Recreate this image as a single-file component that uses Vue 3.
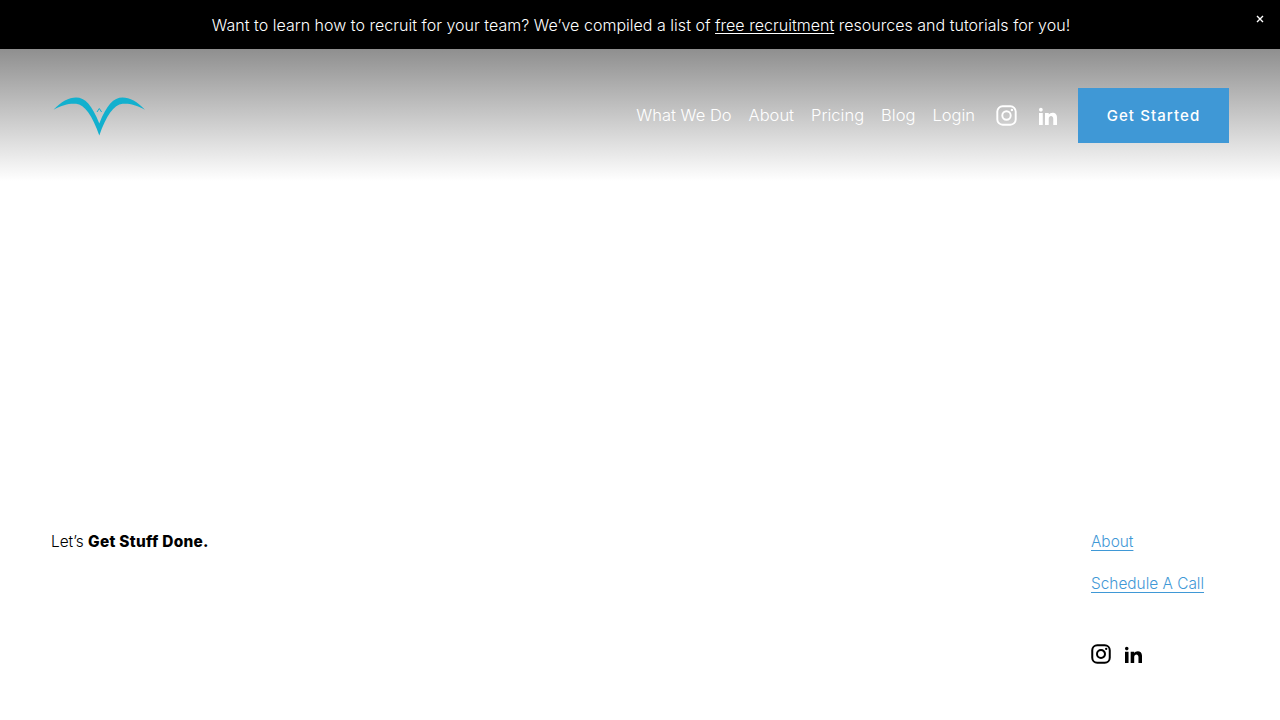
<template>
  <div class="page">
    <div class="banner">
      <p class="banner-text">Want to learn how to recruit for your team? We’ve compiled a list of <a href="#">free recruitment</a> resources and tutorials for you!</p>
      <svg class="banner-close" viewBox="0 0 8 8" width="8" height="8">
        <path d="M1 1L7 7M7 1L1 7" stroke="#fff" stroke-width="1.4"/>
      </svg>
    </div>

    <header class="header">
      <svg class="logo" viewBox="0 0 98 44" width="98" height="44">
        <path fill="#12b0ce" d="M2.5 14.8C10 6.5 18 2.5 25 2.5C34 2.5 41 10 48.3 28.5C55.6 10 62.6 2.5 71.6 2.5C78.6 2.5 86.6 6.5 94 14.8C85 9.6 78 8.2 71.5 8.8C63 9.6 55 21 48.3 40.5C41.6 21 33.6 9.6 25.1 8.8C18.6 8.2 11.6 9.6 2.5 14.8Z"/>
        <path fill="none" stroke="#12b0ce" stroke-width="1" d="M46 17L48.3 13.5L50.6 17"/>
      </svg>
      <nav class="nav">
        <a v-for="item in navItems" :key="item" href="#">{{ item }}</a>
      </nav>
      <div class="socials socials-top">
        <svg viewBox="0 0 24 24" width="21" height="21">
          <rect x="1.5" y="1.5" width="21" height="21" rx="6" fill="none" stroke="currentColor" stroke-width="2.2"/>
          <circle cx="12" cy="12" r="4.8" fill="none" stroke="currentColor" stroke-width="2.2"/>
          <circle cx="18.2" cy="5.8" r="1.4" fill="currentColor"/>
        </svg>
        <svg viewBox="0 0 24 24" width="18" height="18">
          <path fill="currentColor" :d="linkedinPath"/>
        </svg>
      </div>
      <a class="cta" href="#">Get Started</a>
    </header>

    <main class="spacer"></main>

    <footer class="footer">
      <p class="tagline">Let’s <strong>Get Stuff Done.</strong></p>
      <div class="footer-side">
        <a href="#">About</a>
        <a href="#">Schedule A Call</a>
        <div class="socials socials-bottom">
          <svg viewBox="0 0 24 24" width="20" height="20">
            <rect x="1.5" y="1.5" width="21" height="21" rx="6" fill="none" stroke="currentColor" stroke-width="2.4"/>
            <circle cx="12" cy="12" r="4.8" fill="none" stroke="currentColor" stroke-width="2.4"/>
            <circle cx="18.2" cy="5.8" r="1.4" fill="currentColor"/>
          </svg>
          <svg viewBox="0 0 24 24" width="17" height="17">
            <path fill="currentColor" :d="linkedinPath"/>
          </svg>
        </div>
      </div>
    </footer>
  </div>
</template>

<script setup>
const navItems = ['What We Do', 'About', 'Pricing', 'Blog', 'Login']
const linkedinPath = 'M4.98 3.5c0 1.381-1.11 2.5-2.48 2.5s-2.48-1.119-2.48-2.5c0-1.38 1.11-2.5 2.48-2.5s2.48 1.12 2.48 2.5zm.02 4.5h-5v16h5v-16zm7.982 0h-4.968v16h4.969v-8.399c0-4.67 6.029-5.052 6.029 0v8.399h4.988v-10.131c0-7.88-8.922-7.593-11.018-3.714v-2.155z'
</script>

<style scoped>
.page {
  height: 720px;
  display: flex;
  flex-direction: column;
  overflow: hidden;
  font-family: Inter, "Liberation Sans", sans-serif;
  font-weight: 300;
  background: #fff;
}

.banner {
  position: relative;
  height: 49px;
  flex: none;
  box-sizing: border-box;
  padding-left: 2px;
  background: #000;
  color: #fff;
  display: flex;
  align-items: center;
  justify-content: center;
}

.banner-text {
  margin: 0;
  font-size: 16px;
  letter-spacing: 0.02px;
}

.banner-text a {
  color: #fff;
  text-underline-offset: 2px;
}

.banner-close {
  position: absolute;
  top: 15px;
  right: 16px;
}

.header {
  height: 132px;
  flex: none;
  box-sizing: border-box;
  padding: 39px 51px 38px;
  display: flex;
  align-items: center;
  background: linear-gradient(to bottom, #8f8f8f, #fff);
  color: #fff;
}

.logo {
  margin-top: 2px;
}

.nav {
  margin-left: auto;
  margin-bottom: 2px;
  display: flex;
  gap: 17px;
  font-size: 16.5px;
}

.nav a {
  color: #fff;
  text-decoration: none;
}

.socials {
  display: flex;
  align-items: center;
}

.socials-top {
  margin-left: 21px;
  gap: 22px;
}

.cta {
  margin-left: 21px;
  width: 151px;
  height: 55px;
  display: flex;
  align-items: center;
  justify-content: center;
  background: #3f98d6;
  color: #fff;
  font-size: 15px;
  font-weight: 500;
  letter-spacing: 1.1px;
  text-decoration: none;
}

.spacer {
  flex: 1;
}

.footer {
  height: 190px;
  flex: none;
  box-sizing: border-box;
  padding: 0 51px;
  display: flex;
  justify-content: space-between;
  color: #000;
  font-size: 15.4px;
}

.tagline {
  margin: 0;
  line-height: 24px;
}

.tagline strong {
  font-weight: 800;
  letter-spacing: 0.3px;
}

.footer-side {
  width: 138px;
  display: flex;
  flex-direction: column;
  align-items: flex-start;
  gap: 18px;
  line-height: 24px;
}

.footer-side a {
  color: #3f98d6;
  text-decoration: underline;
  text-underline-offset: 3px;
}

.socials-bottom {
  margin-top: 30px;
  gap: 14px;
}
</style>
